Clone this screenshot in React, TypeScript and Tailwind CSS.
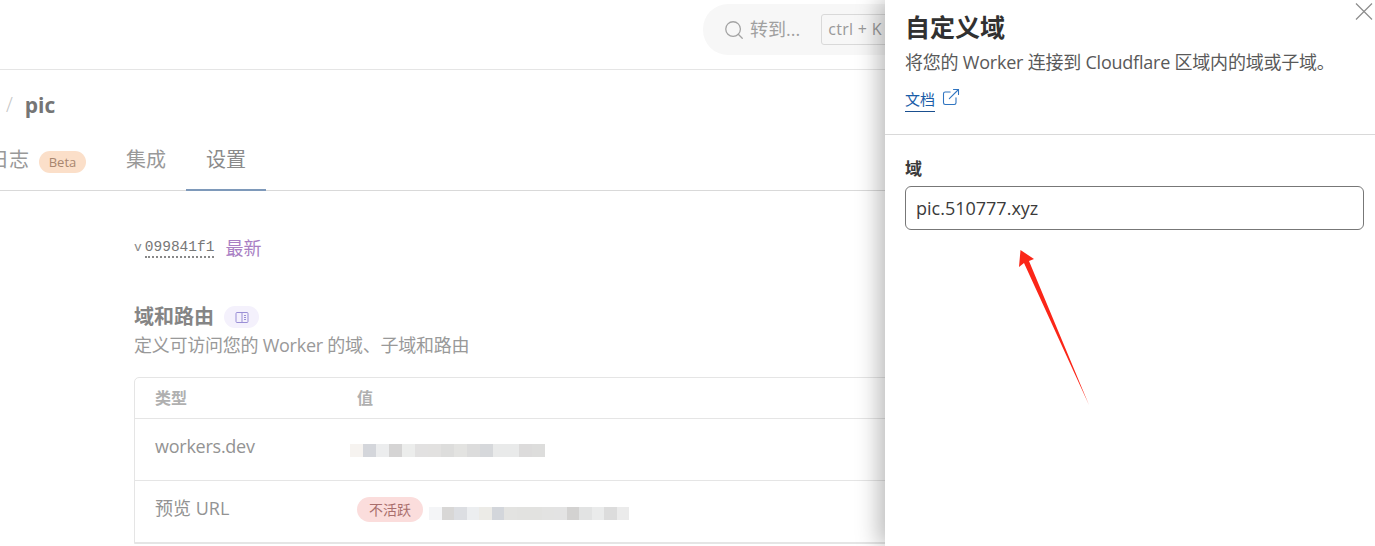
import { ExternalLink, Search } from "lucide-react"

const FONT = "font-['Open_Sans','Noto_Sans_CJK_SC',sans-serif]"

// pixelated bits standing in for the blurred hostnames
const blurOne = [
  "bg-[#f6f3f0]", "bg-[#d4d6db]", "bg-[#ecedee]", "bg-[#d5d4d4]", "bg-[#ecedec]", "bg-[#e2e1e1]",
  "bg-[#e2e1e0]", "bg-[#dddddc]", "bg-[#e3e3e1]", "bg-[#dcdcdc]", "bg-[#d6d8db]", "bg-[#e9eaea]",
  "bg-[#e9eaea]", "bg-[#dcdbdb]", "bg-[#dddddc]",
]
const blurTwo = [
  "bg-[#f4f5f7]", "bg-[#d8d7d6]", "bg-[#dcdee2]", "bg-[#eceef0]", "bg-[#ecebe7]", "bg-[#d3d6db]",
  "bg-[#e3e3e1]", "bg-[#e2e2e0]", "bg-[#e2e2e0]", "bg-[#e3e3e2]", "bg-[#e3e3e3]", "bg-[#d3d2d1]",
  "bg-[#e2e3e3]", "bg-[#eaebeb]", "bg-[#dcdcdc]", "bg-[#ebebeb]",
]

function Blur({ cells, cellClass }: { cells: string[]; cellClass: string }) {
  return (
    <div className="flex h-[13px]">
      {cells.map((c, i) => (
        <div key={i} className={`${cellClass} h-full ${c}`}></div>
      ))}
    </div>
  )
}

function Background() {
  return (
    <div className="w-[885px] shrink-0 overflow-hidden bg-white text-[#8a8a8a]">
      {/* top bar */}
      <div className="h-[70px] border-b border-[#e5e5e5] pt-1 pl-[703px]">
        <div className="w-[240px] h-[51px] rounded-[25px] bg-[#f7f7f7] flex items-center pl-[20px]">
          <Search size={22} strokeWidth={1.4} className="shrink-0 text-[#a3a3a3]" />
          <span className="ml-[5px] text-[18px] text-[#a0a0a0]">转到...</span>
          <span className="ml-[21px] h-[31px] w-[80px] shrink-0 rounded-[3px] border border-[#d9d9d9] pl-[6px] text-[16px] leading-[29px] tracking-[0.3px] text-[#999]">
            ctrl + K
          </span>
        </div>
      </div>

      {/* breadcrumb */}
      <div className="h-[70px] pt-[21px] flex items-start pl-[6px]">
        <span className="text-[20px] leading-[28px] text-[#c4c4c4] font-light">/</span>
        <span className="ml-[12px] text-[21px] leading-[28px] font-bold text-[#757575]">pic</span>
      </div>

      {/* tabs */}
      <div className="h-[51px] border-b border-[#d9d9d9] flex items-start -ml-[11px]">
        <span className="mt-[6px] text-[20px] leading-[28px] text-[#999]">日志</span>
        <span className="mt-[11px] ml-[10px] h-[22px] w-[47px] rounded-full bg-[#fbdfc9] text-center text-[13px] leading-[22px] text-[#a8866f]">
          Beta
        </span>
        <span className="mt-[6px] ml-[40px] text-[20px] leading-[28px] text-[#999]">集成</span>
        <div className="ml-[20px] h-[51px] w-[80px] shrink-0 border-b-2 border-[#7e99ba] pt-[6px] text-center">
          <span className="text-[20px] leading-[28px] text-[#8a8a8a]">设置</span>
        </div>
      </div>

      {/* content */}
      <div className="pl-[134px]">
        <div className="mt-[43px] h-[28px] flex items-center">
          <span className="text-[13px] font-['Liberation_Mono',monospace] text-[#888]">v</span>
          <span className="ml-[3px] text-[14.5px] leading-[17px] font-['Liberation_Mono',monospace] text-[#777] border-b-2 border-dotted border-[#888]">
            099841f1
          </span>
          <span className="ml-[11px] text-[18px] text-[#a97fc4]">最新</span>
        </div>

        <div className="mt-[41px] h-[28px] flex items-center">
          <span className="text-[20px] font-bold text-[#858585]">域和路由</span>
          <span className="ml-[10px] h-[22px] w-[35px] rounded-full bg-[#f4f1fc] flex items-center justify-center">
            <svg width="14" height="13" viewBox="0 0 14 13" fill="none" stroke="#9a8fd6" strokeWidth="1">
              <rect x="1" y="1.5" width="12" height="10" rx="1" />
              <path d="M7 1.5v10M9 4.5h2M9 6.5h2M9 8.5h2" />
            </svg>
          </span>
        </div>
        <p className="mt-[2px] h-[25px] text-[18px] leading-[25px] tracking-[-0.25px] text-[#999]">
          定义可访问您的 Worker 的域、子域和路由
        </p>

        <div className="mt-[19px] w-[900px] rounded-t-[5px] border border-[#e5e5e5]">
          <div className="h-[41px] border-b border-[#e5e5e5] flex items-center pl-5 text-[16px] font-bold text-[#b0b0b0]">
            <span className="w-[202px]">类型</span>
            <span>值</span>
          </div>
          <div className="h-[62px] border-b border-[#e5e5e5] flex items-start pl-5 pt-[13px]">
            <span className="w-[195px] text-[18px] leading-[29px] tracking-[-0.25px] text-[#939393]">workers.dev</span>
            <div className="mt-[12px]">
              <Blur cells={blurOne} cellClass="w-[13px]" />
            </div>
          </div>
          <div className="h-[62px] border-b border-[#e5e5e5] flex items-start pl-5 pt-[13px]">
            <span className="w-[202px] text-[18px] leading-[29px] text-[#939393]">预览 URL</span>
            <span className="mt-[3px] h-[25px] w-[66px] rounded-full bg-[#fbdddc] text-center text-[14px] leading-[25px] text-[#a96f6d]">
              不活跃
            </span>
            <div className="ml-[6px] mt-[13px]">
              <Blur cells={blurTwo} cellClass="w-[12.5px]" />
            </div>
          </div>
        </div>
      </div>
    </div>
  )
}

function Drawer() {
  return (
    <div className="relative z-10 w-[490px] h-[546px] shrink-0 bg-white shadow-[-6px_0_22px_rgba(0,0,0,0.28)]">
      <button className="absolute left-[470px] top-[3px]">
        <svg width="18" height="17" viewBox="0 0 18 17" fill="none" stroke="#8c8c8c" strokeWidth="1.2">
          <path d="M1 0.5l16 16M17 0.5l-16 16" />
        </svg>
      </button>
      <div className="h-[135px] border-b border-[#d9d9d9] px-5 pt-[9px]">
        <h2 className="text-[25px] leading-[36px] font-bold text-[#313131]">自定义域</h2>
        <p className="mt-[4px] text-[18px] leading-[26px] tracking-[-0.22px] text-[#595959] whitespace-nowrap">
          将您的 Worker 连接到 Cloudflare 区域内的域或子域。
        </p>
        <div className="mt-[14px] flex items-start">
          <a className="text-[15px] leading-[21px] text-[#1a5da8] border-b border-[#1a4f8f] pb-px">文档</a>
          <ExternalLink size={20} strokeWidth={1.3} className="ml-[6px] -mt-[2px] text-[#2f74c0]" />
        </div>
      </div>
      <div className="px-5 pt-[23px]">
        <label className="block text-[17px] leading-[22px] font-bold text-[#3b3b3b]">域</label>
        <input
          readOnly
          defaultValue="pic.510777.xyz"
          className="mt-[6px] block w-[459px] h-[44px] rounded-[6px] border border-[#777] bg-white px-[10px] text-[18px] text-[#3a3a3a] outline-none"
        />
      </div>
    </div>
  )
}

export default function App() {
  return (
    <div className={`relative w-[1375px] h-[546px] overflow-hidden flex bg-white ${FONT}`}>
      <Background />
      <Drawer />
      {/* red annotation arrow */}
      <svg className="absolute left-[1015px] top-[245px] z-20" width="80" height="165" viewBox="1015 245 80 165">
        <polygon points="1020.5,250 1034,259 1029,261 1089,405 1024,263 1019,267" fill="#fb2618" />
      </svg>
    </div>
  )
}
